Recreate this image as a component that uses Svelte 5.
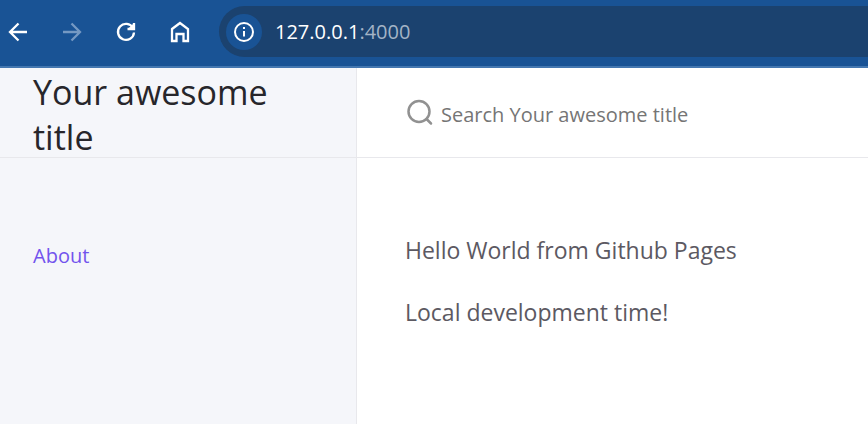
<script>
  const siteTitle = 'Your awesome title';
  const paragraphs = ['Hello World from Github Pages', 'Local development time!'];
</script>

<div class="window">
  <header class="toolbar">
    <nav class="controls" aria-label="Browser">
      <button type="button" aria-label="Back">
        <svg viewBox="0 0 24 24"><path d="M21 12H4M12.5 3.5L4 12L12.5 20.5" /></svg>
      </button>
      <button type="button" aria-label="Forward" disabled>
        <svg viewBox="0 0 24 24"><path d="M3 12H20M11.5 3.5L20 12L11.5 20.5" /></svg>
      </button>
      <button type="button" aria-label="Reload">
        <svg viewBox="0 0 24 24">
          <path d="M19 8A8 8 0 1 0 20 12.5" />
          <path d="M20 3V9H13.5" />
          <path d="M15.5 8L19 4.5V8Z" fill="currentColor" stroke-width="1" />
        </svg>
      </button>
      <button type="button" aria-label="Home">
        <svg viewBox="0 0 24 24">
          <path d="M4 9L12 3L20 9V21H15.5V14H8.5V21H4Z" />
        </svg>
      </button>
    </nav>
    <div class="address">
      <button type="button" class="info" aria-label="Site information">
        <svg viewBox="0 0 24 24">
          <circle cx="12" cy="12" r="9" />
          <path d="M12 11V16.5M12 7V9" />
        </svg>
      </button>
      <span class="url">127.0.0.1<span class="port">:4000</span></span>
    </div>
  </header>

  <div class="page">
    <aside class="sidebar">
      <div class="brand"><a href="#home">{siteTitle}</a></div>
      <nav class="links" aria-label="Main"><a href="#about">About</a></nav>
    </aside>
    <div class="main">
      <div class="search">
        <label for="search" aria-label="Search">
          <svg viewBox="0 0 28 28">
            <circle cx="13" cy="12.5" r="10.5" />
            <path d="M20.5 20L25 24.5" />
          </svg>
        </label>
        <input id="search" type="text" placeholder="Search {siteTitle}" autocomplete="off" />
      </div>
      <main class="content">
        {#each paragraphs as text}
          <p>{text}</p>
        {/each}
      </main>
    </div>
  </div>
</div>

<style>
  :global(body) {
    margin: 0;
  }

  .window {
    display: flex;
    flex-direction: column;
    min-height: 100vh;
    font-family: 'Segoe UI', 'Open Sans', sans-serif;
    background: #fff;
  }

  svg {
    display: block;
    fill: none;
    stroke: currentColor;
  }

  button {
    padding: 0;
    border: 0;
    background: none;
    color: #fff;
  }

  .toolbar {
    display: flex;
    align-items: center;
    gap: 27px;
    padding: 6px 0 9px 6px;
    border-bottom: 2px solid #4477b0;
    background: #195395;
  }

  .controls {
    display: flex;
    gap: 30px;
  }

  .controls svg {
    width: 24px;
    height: 24px;
    stroke-width: 2.3;
  }

  .controls button:disabled {
    color: #7599c3;
  }

  .address {
    display: flex;
    flex: 1;
    align-items: center;
    gap: 13px;
    height: 51px;
    padding-left: 7px;
    border-radius: 26px 0 0 26px;
    background: #1b426f;
  }

  .info {
    display: grid;
    place-items: center;
    width: 36px;
    height: 36px;
    border-radius: 50%;
    background: #195395;
  }

  .info svg {
    width: 24px;
    height: 24px;
    stroke-width: 2;
  }

  .url {
    font-size: 20px;
    line-height: 28px;
    color: #fff;
  }

  .port {
    color: #a4b4c6;
  }

  .page {
    display: flex;
    flex: 1;
  }

  .sidebar {
    box-sizing: border-box;
    flex: 0 0 357px;
    border-right: 1px solid #e8e8ec;
    background: #f5f6fa;
  }

  .brand,
  .search {
    box-sizing: border-box;
    display: flex;
    align-items: center;
    height: 90px;
    border-bottom: 1px solid #e8e8ec;
  }

  .brand {
    padding: 4px 48px 0 33px;
    font-size: 34px;
    line-height: 45px;
  }

  .brand a {
    color: #27262b;
    text-decoration: none;
  }

  .links {
    padding: 82px 33px;
    font-size: 20px;
    line-height: 32px;
  }

  .links a {
    color: #7253ed;
    text-decoration: none;
  }

  .main {
    flex: 1;
    min-width: 0;
  }

  .search {
    gap: 7px;
    padding-left: 49px;
    color: #919191;
  }

  .search svg {
    width: 28px;
    height: 28px;
    stroke-width: 2.5;
    stroke-linecap: round;
  }

  .search input {
    flex: 1;
    min-width: 0;
    padding: 4px 0 0;
    border: 0;
    outline: 0;
    background: none;
    color: #5c5962;
    font: inherit;
    font-size: 20px;
    line-height: 28px;
  }

  .search input::placeholder {
    color: #757575;
    opacity: 1;
  }

  .content {
    padding: 73px 48px;
    color: #5c5962;
    font-size: 23px;
    line-height: 38px;
  }

  p {
    margin: 0 0 24px;
  }
</style>
